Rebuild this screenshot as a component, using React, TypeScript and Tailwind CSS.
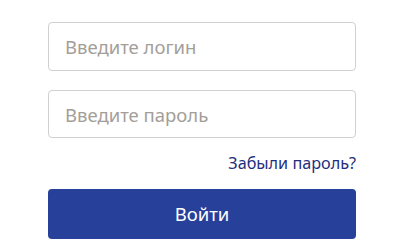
export default function App() {
  return (
    <div className="w-[400px] h-[252px] bg-white pt-[22px] pl-[48px]" style={{ fontFamily: '"Noto Sans", sans-serif' }}>
      <div className="w-[308px] flex flex-col">
        <input
          type="text"
          placeholder="Введите логин"
          className="h-[49px] px-4 border border-[#d0d0d0] rounded-[4px] text-[18.5px] text-gray-700 placeholder-[#a39e99] outline-none"
        />
        <input
          type="password"
          placeholder="Введите пароль"
          className="mt-[19px] h-[48px] px-4 border border-[#d0d0d0] rounded-[4px] text-[18.5px] text-gray-700 placeholder-[#a39e99] outline-none"
        />
        <a href="#" className="self-end mt-[15px] text-[16.2px] leading-[20px] text-[#1f2f7d]">
          Забыли пароль?
        </a>
        <button className="mt-[16px] h-[50px] rounded-[4px] bg-[#27409a] text-white text-[18.5px]">
          Войти
        </button>
      </div>
    </div>
  )
}
